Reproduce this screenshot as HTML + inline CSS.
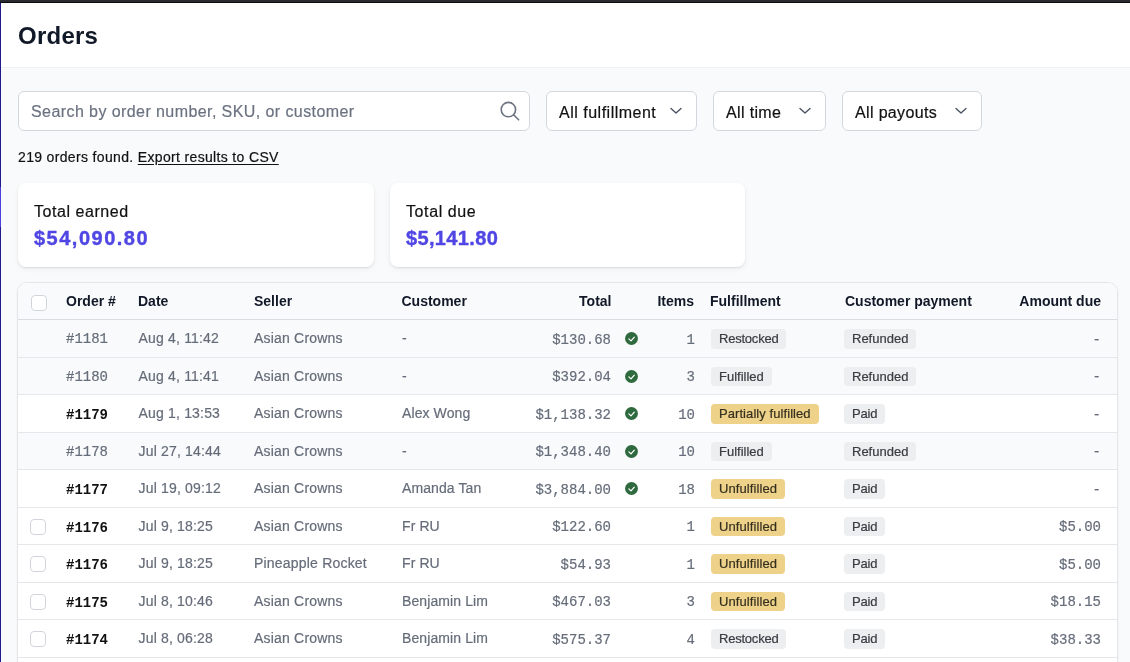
<!DOCTYPE html>
<html><head><meta charset="utf-8">
<style>
*{box-sizing:border-box;margin:0;padding:0}
html,body{width:1130px;height:662px;overflow:hidden}
body{will-change:transform;background:#f9fafb;font-family:"Liberation Sans",sans-serif;position:relative;color:#111827}
.abs{position:absolute}
#topbar{left:0;top:0;width:1130px;height:3px;background:#2a2a30;border-bottom:1px solid #0c0c0e}
#leftbar{left:0;top:3px;width:1px;height:659px;background:#221a8a;z-index:5}
#leftseg{left:0;top:187px;width:1px;height:40px;background:#4a40dc;z-index:6}
#hdr{left:0;top:3px;width:1130px;height:65px;background:#fff;border-bottom:1px solid #f0f1f3}
#title{left:18px;top:21px;font-size:24px;font-weight:bold;line-height:30px;color:#111827;letter-spacing:0.25px}
.box{background:#fff;border:1px solid #d3d6dc;border-radius:6px;height:40px;top:91px}
#search{left:18px;width:512px}
.ph{position:absolute;left:12px;top:11px;font-size:16px;line-height:18px;color:#6b7280;letter-spacing:0.42px;white-space:nowrap;-webkit-text-stroke:0.2px currentColor}
.dd .t{position:absolute;left:12px;top:12px;font-size:16px;line-height:18px;color:#111;white-space:nowrap;-webkit-text-stroke:0.2px currentColor}
.dd svg{position:absolute;top:15px}
#found{left:18px;top:149px;font-size:14px;line-height:16px;color:#111;letter-spacing:0.34px;white-space:nowrap;-webkit-text-stroke:0.2px currentColor}
#found u{text-decoration:underline;text-underline-offset:2px}
.card{top:183px;height:84px;background:#fff;border-radius:8px;box-shadow:0 1px 2px rgba(0,0,0,0.1),0 2px 6px rgba(0,0,0,0.05)}
.card .l{position:absolute;left:16px;top:20px;font-size:16px;line-height:18px;color:#111;white-space:nowrap;-webkit-text-stroke:0.2px currentColor}
.card .v{position:absolute;left:16px;top:43px;font-size:20px;line-height:24px;font-weight:bold;color:#5046e4;white-space:nowrap;-webkit-text-stroke:0.4px currentColor}
#table{left:17px;top:282px;width:1101px;height:400px;background:#fff;border:1px solid #e5e6e8;border-radius:10px;overflow:hidden;box-shadow:0 1px 3px rgba(0,0,0,0.05)}
.row{position:absolute;left:0;width:1099px;border-bottom:1px solid #e5e7eb}
.hrow{top:0;height:37px;background:#f9fafb;border-bottom:1px solid #d9dce1}
.dis{background:#f9fafb}
.c{position:absolute;white-space:nowrap}
.h{font-size:14px;font-weight:bold;color:#111827;top:10px;line-height:16px}
.cb{width:16px;height:16px;border:1px solid #d1d5db;border-radius:4px;background:#fff;left:13px}
.mono{font-family:"Liberation Mono",monospace;font-size:14px;line-height:16px;color:#666d7a;-webkit-text-stroke:0.2px currentColor}
.txt{font-size:14px;line-height:16px;color:#656c79;-webkit-text-stroke:0.2px currentColor}
.ord{font-family:"Liberation Mono",monospace;font-size:14px;line-height:16px;color:#666d7a;-webkit-text-stroke:0.2px currentColor}
.ordb{font-family:"Liberation Mono",monospace;font-weight:bold;font-size:14px;line-height:16px;color:#111}
.badge{height:19.5px;border-radius:4px;font-size:13px;line-height:20px;padding:0 8px;color:#3a3a40;-webkit-text-stroke:0.2px currentColor}
.gray{background:#eceef0}
.yel{background:#eed28a;color:#35301f}
.chk{width:13px;height:13px;border-radius:50%;background:#2e6b3f}
</style></head>
<body>
<div id="topbar" class="abs"></div>
<div id="leftbar" class="abs"></div>
<div id="leftseg" class="abs"></div>
<div id="hdr" class="abs"></div>
<div id="title" class="abs">Orders</div>

<div id="search" class="abs box">
  <div class="ph">Search by order number, SKU, or customer</div>
  <svg class="abs" style="left:480px;top:8px" width="22" height="22" viewBox="0 0 22 22"><circle cx="9.4" cy="9.6" r="7.2" fill="none" stroke="#6b7280" stroke-width="1.6"/><line x1="14.6" y1="14.8" x2="19.6" y2="19.8" stroke="#6b7280" stroke-width="1.6" stroke-linecap="round"/></svg>
</div>

<div class="abs box dd" style="left:546px;width:151px">
  <div class="t" style="letter-spacing:0.5px">All fulfillment</div>
  <svg style="left:122px" width="14" height="8" viewBox="0 0 14 8"><polyline points="2,1.5 7,6.1 12,1.5" fill="none" stroke="#4b5563" stroke-width="1.4" stroke-linecap="round" stroke-linejoin="round"/></svg>
</div>
<div class="abs box dd" style="left:713px;width:113px">
  <div class="t" style="letter-spacing:0.35px">All time</div>
  <svg style="left:84px" width="14" height="8" viewBox="0 0 14 8"><polyline points="2,1.5 7,6.1 12,1.5" fill="none" stroke="#4b5563" stroke-width="1.4" stroke-linecap="round" stroke-linejoin="round"/></svg>
</div>
<div class="abs box dd" style="left:842px;width:140px">
  <div class="t" style="letter-spacing:0.35px">All payouts</div>
  <svg style="left:111px" width="14" height="8" viewBox="0 0 14 8"><polyline points="2,1.5 7,6.1 12,1.5" fill="none" stroke="#4b5563" stroke-width="1.4" stroke-linecap="round" stroke-linejoin="round"/></svg>
</div>

<div id="found" class="abs">219 orders found. <u>Export results to CSV</u></div>

<div class="abs card" style="left:18px;width:356px">
  <div class="l" style="letter-spacing:0.55px">Total earned</div>
  <div class="v" style="letter-spacing:1.5px">$54,090.80</div>
</div>
<div class="abs card" style="left:390px;width:355px">
  <div class="l" style="letter-spacing:0.6px">Total due</div>
  <div class="v" style="letter-spacing:0.35px">$5,141.80</div>
</div>

<div id="table" class="abs">
  <div class="row hrow">
    <div class="c cb" style="top:12px"></div>
    <div class="c h" style="left:48px">Order #</div>
    <div class="c h" style="left:120px">Date</div>
    <div class="c h" style="left:236px">Seller</div>
    <div class="c h" style="left:383.5px">Customer</div>
    <div class="c h" style="right:505.5px">Total</div>
    <div class="c h" style="right:423px">Items</div>
    <div class="c h" style="left:692px">Fulfillment</div>
    <div class="c h" style="left:827px">Customer payment</div>
    <div class="c h" style="right:16px">Amount due</div>
  </div>
  <div id="rows"><div class="row dis" style="top:37.0px;height:37.5px"><div class="c ord" style="left:48px;top:11px">#1181</div><div class="c txt" style="left:120.5px;top:10px;letter-spacing:0.18px">Aug 4, 11:42</div><div class="c txt" style="left:236px;top:10px;letter-spacing:0.2px">Asian Crowns</div><div class="c txt" style="left:384px;top:10px;letter-spacing:0.1px">-</div><div class="c mono" style="right:506px;top:11.8px">$130.68</div><svg class="c" style="left:606.5px;top:12.3px" width="13" height="13" viewBox="0 0 13 13"><circle cx="6.5" cy="6.5" r="6.45" fill="#2e6a3e"/><polyline points="3.9,6.9 6,8.9 9.3,5.1" fill="none" stroke="#fff" stroke-width="1.25" stroke-linecap="round" stroke-linejoin="round"/></svg><div class="c mono" style="right:422px;top:11.5px">1</div><div class="c badge gray" style="left:693px;top:9px;letter-spacing:-0.22px">Restocked</div><div class="c badge gray" style="left:826px;top:9px;letter-spacing:0px">Refunded</div><div class="c mono" style="right:16px;top:11.8px">-</div></div>
<div class="row dis" style="top:74.5px;height:37.5px"><div class="c ord" style="left:48px;top:11px">#1180</div><div class="c txt" style="left:120.5px;top:10px;letter-spacing:0.18px">Aug 4, 11:41</div><div class="c txt" style="left:236px;top:10px;letter-spacing:0.2px">Asian Crowns</div><div class="c txt" style="left:384px;top:10px;letter-spacing:0.1px">-</div><div class="c mono" style="right:506px;top:11.8px">$392.04</div><svg class="c" style="left:606.5px;top:12.3px" width="13" height="13" viewBox="0 0 13 13"><circle cx="6.5" cy="6.5" r="6.45" fill="#2e6a3e"/><polyline points="3.9,6.9 6,8.9 9.3,5.1" fill="none" stroke="#fff" stroke-width="1.25" stroke-linecap="round" stroke-linejoin="round"/></svg><div class="c mono" style="right:422px;top:11.5px">3</div><div class="c badge gray" style="left:693px;top:9px;letter-spacing:0px">Fulfilled</div><div class="c badge gray" style="left:826px;top:9px;letter-spacing:0px">Refunded</div><div class="c mono" style="right:16px;top:11.8px">-</div></div>
<div class="row" style="top:112.0px;height:37.5px"><div class="c ordb" style="left:48px;top:12px">#1179</div><div class="c txt" style="left:120.5px;top:10px;letter-spacing:0.18px">Aug 1, 13:53</div><div class="c txt" style="left:236px;top:10px;letter-spacing:0.2px">Asian Crowns</div><div class="c txt" style="left:384px;top:10px;letter-spacing:0.1px">Alex Wong</div><div class="c mono" style="right:506px;top:11.8px">$1,138.32</div><svg class="c" style="left:606.5px;top:12.3px" width="13" height="13" viewBox="0 0 13 13"><circle cx="6.5" cy="6.5" r="6.45" fill="#2e6a3e"/><polyline points="3.9,6.9 6,8.9 9.3,5.1" fill="none" stroke="#fff" stroke-width="1.25" stroke-linecap="round" stroke-linejoin="round"/></svg><div class="c mono" style="right:422px;top:11.5px">10</div><div class="c badge yel" style="left:693px;top:9px;letter-spacing:0.07px">Partially fulfilled</div><div class="c badge gray" style="left:826px;top:9px;letter-spacing:-0.2px">Paid</div><div class="c mono" style="right:16px;top:11.8px">-</div></div>
<div class="row dis" style="top:149.5px;height:37.5px"><div class="c ord" style="left:48px;top:11px">#1178</div><div class="c txt" style="left:120.5px;top:10px;letter-spacing:0.18px">Jul 27, 14:44</div><div class="c txt" style="left:236px;top:10px;letter-spacing:0.2px">Asian Crowns</div><div class="c txt" style="left:384px;top:10px;letter-spacing:0.1px">-</div><div class="c mono" style="right:506px;top:11.8px">$1,348.40</div><svg class="c" style="left:606.5px;top:12.3px" width="13" height="13" viewBox="0 0 13 13"><circle cx="6.5" cy="6.5" r="6.45" fill="#2e6a3e"/><polyline points="3.9,6.9 6,8.9 9.3,5.1" fill="none" stroke="#fff" stroke-width="1.25" stroke-linecap="round" stroke-linejoin="round"/></svg><div class="c mono" style="right:422px;top:11.5px">10</div><div class="c badge gray" style="left:693px;top:9px;letter-spacing:0px">Fulfilled</div><div class="c badge gray" style="left:826px;top:9px;letter-spacing:0px">Refunded</div><div class="c mono" style="right:16px;top:11.8px">-</div></div>
<div class="row" style="top:187.0px;height:37.5px"><div class="c ordb" style="left:48px;top:12px">#1177</div><div class="c txt" style="left:120.5px;top:10px;letter-spacing:0.18px">Jul 19, 09:12</div><div class="c txt" style="left:236px;top:10px;letter-spacing:0.2px">Asian Crowns</div><div class="c txt" style="left:384px;top:10px;letter-spacing:0.1px">Amanda Tan</div><div class="c mono" style="right:506px;top:11.8px">$3,884.00</div><svg class="c" style="left:606.5px;top:12.3px" width="13" height="13" viewBox="0 0 13 13"><circle cx="6.5" cy="6.5" r="6.45" fill="#2e6a3e"/><polyline points="3.9,6.9 6,8.9 9.3,5.1" fill="none" stroke="#fff" stroke-width="1.25" stroke-linecap="round" stroke-linejoin="round"/></svg><div class="c mono" style="right:422px;top:11.5px">18</div><div class="c badge yel" style="left:693px;top:9px;letter-spacing:0.1px">Unfulfilled</div><div class="c badge gray" style="left:826px;top:9px;letter-spacing:-0.2px">Paid</div><div class="c mono" style="right:16px;top:11.8px">-</div></div>
<div class="row" style="top:224.5px;height:37.5px"><div class="c cb" style="top:11px;left:12px"></div><div class="c ordb" style="left:48px;top:12px">#1176</div><div class="c txt" style="left:120.5px;top:10px;letter-spacing:0.18px">Jul 9, 18:25</div><div class="c txt" style="left:236px;top:10px;letter-spacing:0.2px">Asian Crowns</div><div class="c txt" style="left:384px;top:10px;letter-spacing:0.1px">Fr RU</div><div class="c mono" style="right:506px;top:11.8px">$122.60</div><div class="c mono" style="right:422px;top:11.5px">1</div><div class="c badge yel" style="left:693px;top:9px;letter-spacing:0.1px">Unfulfilled</div><div class="c badge gray" style="left:826px;top:9px;letter-spacing:-0.2px">Paid</div><div class="c mono" style="right:16px;top:11.8px">$5.00</div></div>
<div class="row" style="top:262.0px;height:37.5px"><div class="c cb" style="top:11px;left:12px"></div><div class="c ordb" style="left:48px;top:12px">#1176</div><div class="c txt" style="left:120.5px;top:10px;letter-spacing:0.18px">Jul 9, 18:25</div><div class="c txt" style="left:236px;top:10px;letter-spacing:0.2px">Pineapple Rocket</div><div class="c txt" style="left:384px;top:10px;letter-spacing:0.1px">Fr RU</div><div class="c mono" style="right:506px;top:11.8px">$54.93</div><div class="c mono" style="right:422px;top:11.5px">1</div><div class="c badge yel" style="left:693px;top:9px;letter-spacing:0.1px">Unfulfilled</div><div class="c badge gray" style="left:826px;top:9px;letter-spacing:-0.2px">Paid</div><div class="c mono" style="right:16px;top:11.8px">$5.00</div></div>
<div class="row" style="top:299.5px;height:37.5px"><div class="c cb" style="top:11px;left:12px"></div><div class="c ordb" style="left:48px;top:12px">#1175</div><div class="c txt" style="left:120.5px;top:10px;letter-spacing:0.18px">Jul 8, 10:46</div><div class="c txt" style="left:236px;top:10px;letter-spacing:0.2px">Asian Crowns</div><div class="c txt" style="left:384px;top:10px;letter-spacing:0.1px">Benjamin Lim</div><div class="c mono" style="right:506px;top:11.8px">$467.03</div><div class="c mono" style="right:422px;top:11.5px">3</div><div class="c badge yel" style="left:693px;top:9px;letter-spacing:0.1px">Unfulfilled</div><div class="c badge gray" style="left:826px;top:9px;letter-spacing:-0.2px">Paid</div><div class="c mono" style="right:16px;top:11.8px">$18.15</div></div>
<div class="row" style="top:337.0px;height:37.5px"><div class="c cb" style="top:11px;left:12px"></div><div class="c ordb" style="left:48px;top:12px">#1174</div><div class="c txt" style="left:120.5px;top:10px;letter-spacing:0.18px">Jul 8, 06:28</div><div class="c txt" style="left:236px;top:10px;letter-spacing:0.2px">Asian Crowns</div><div class="c txt" style="left:384px;top:10px;letter-spacing:0.1px">Benjamin Lim</div><div class="c mono" style="right:506px;top:11.8px">$575.37</div><div class="c mono" style="right:422px;top:11.5px">4</div><div class="c badge gray" style="left:693px;top:9px;letter-spacing:-0.22px">Restocked</div><div class="c badge gray" style="left:826px;top:9px;letter-spacing:-0.2px">Paid</div><div class="c mono" style="right:16px;top:11.8px">$38.33</div></div>
<div class="row" style="top:374.5px;height:37.5px"><div class="c cb" style="top:11px;left:12px"></div><div class="c ordb" style="left:48px;top:12px">#1173</div><div class="c txt" style="left:120.5px;top:10px;letter-spacing:0.18px">Jul 8, 06:20</div><div class="c txt" style="left:236px;top:10px;letter-spacing:0.2px">Asian Crowns</div><div class="c txt" style="left:384px;top:10px;letter-spacing:0.1px">Benjamin Lim</div><div class="c mono" style="right:506px;top:11.8px">$575.37</div><div class="c mono" style="right:422px;top:11.5px">4</div><div class="c badge gray" style="left:693px;top:9px;letter-spacing:-0.22px">Restocked</div><div class="c badge gray" style="left:826px;top:9px;letter-spacing:-0.2px">Paid</div><div class="c mono" style="right:16px;top:11.8px">$38.33</div></div></div>
</div>
</body></html>
